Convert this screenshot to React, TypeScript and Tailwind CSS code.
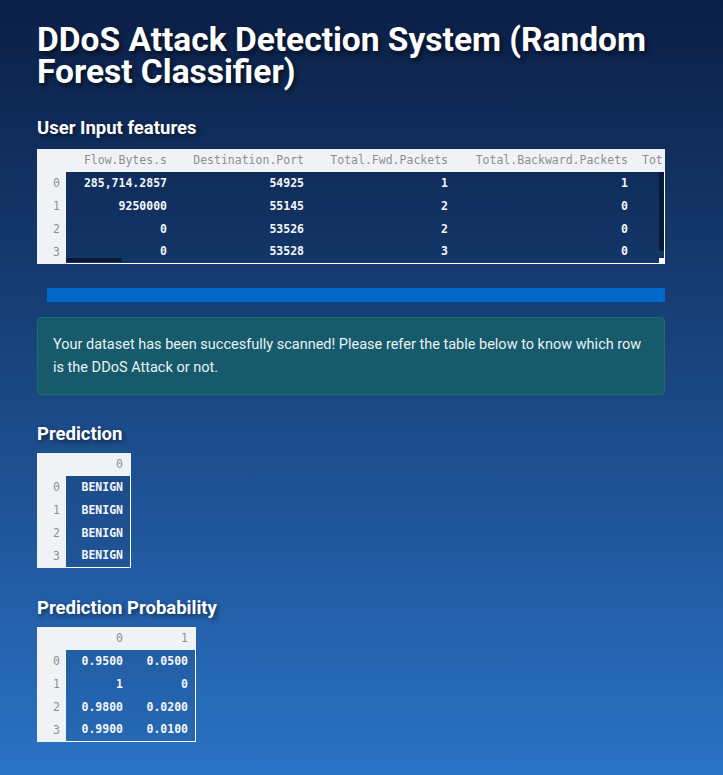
import React from "react";

const sans = { fontFamily: "Roboto, 'Noto Sans', sans-serif" };
const mono = { fontFamily: "'DejaVu Sans Mono', 'Liberation Mono', monospace" };

type Col = { name: string; w: number; align?: "left" | "right" };

function DataTable({
    cols,
    rows,
    width,
    scroll,
}: {
    cols: Col[];
    rows: string[][];
    width: number;
    scroll?: boolean;
}) {
    return (
        <div className="relative overflow-hidden text-[11.5px]" style={{ ...mono, width }}>
            <div className="flex h-[23px] items-center bg-[#f0f2f6] text-[#8d8f98]">
                <div className="w-[29px] shrink-0" />
                {cols.map((c, i) => (
                    <div
                        key={i}
                        className={`shrink-0 overflow-hidden whitespace-nowrap ${c.align === "left" ? "pl-[6px] text-left" : "pr-[8px] text-right"}`}
                        style={{ width: c.w }}
                    >
                        {c.name}
                    </div>
                ))}
            </div>
            <div className="flex">
                <div className="flex w-[29px] shrink-0 flex-col bg-[#f0f2f6] text-[#8d8f98]">
                    {rows.map((_, ri) => (
                        <div key={ri} className="flex h-[23px] items-center justify-end pr-[6px]">
                            {ri}
                        </div>
                    ))}
                </div>
                <div className="flex min-w-0 flex-1 flex-col overflow-hidden border-b border-r border-white bg-black/[0.06]">
                    {rows.map((r, ri) => (
                        <div key={ri} className={`flex items-center ${ri === rows.length - 1 ? "h-[22px]" : "h-[23px]"}`}>
                            {cols.map((c, i) => (
                                <div
                                    key={i}
                                    className="shrink-0 overflow-hidden whitespace-nowrap pr-[8px] text-right font-semibold text-[#f4f6fa]"
                                    style={{ width: c.w }}
                                >
                                    {r[i] ?? ""}
                                </div>
                            ))}
                        </div>
                    ))}
                </div>
            </div>
            {scroll && (
                <>
                    <div className="absolute bottom-[2px] left-[29px] h-[4px] w-[56px] rounded-full bg-[#0a1a36]" />
                    <div className="absolute right-[1px] top-[23px] h-[79px] w-[5px] rounded-b bg-[#0a1a36]" />
                    <div className="absolute bottom-0 right-0 h-[6px] w-[6px] bg-white" />
                </>
            )}
        </div>
    );
}

function Heading({ children }: { children: React.ReactNode }) {
    return (
        <h3 className="text-[18.5px] font-bold leading-[24px] text-white [text-shadow:2px_2px_5px_rgba(0,0,0,0.55)]" style={sans}>
            {children}
        </h3>
    );
}

export default function App() {
    const featureCols: Col[] = [
        { name: "Flow.Bytes.s", w: 109 },
        { name: "Destination.Port", w: 137 },
        { name: "Total.Fwd.Packets", w: 144 },
        { name: "Total.Backward.Packets", w: 180 },
        { name: "Tot", w: 29, align: "left" },
    ];
    const featureRows = [
        ["285,714.2857", "54925", "1", "1"],
        ["9250000", "55145", "2", "0"],
        ["0", "53526", "2", "0"],
        ["0", "53528", "3", "0"],
    ];

    return (
        <div className="min-h-screen w-full bg-gradient-to-b from-[#0b1f46] to-[#2a73c6] pb-8" style={sans}>
            <div className="flex flex-col pl-[37px] pr-[58px] pt-[24px]">
                <h1 className="text-[33.5px] font-bold leading-[32px] text-white [text-shadow:2px_3px_5px_rgba(0,0,0,0.6)]">
                    DDoS Attack Detection System (Random Forest Classifier)
                </h1>

                <div className="mt-[28px]">
                    <Heading>User Input features</Heading>
                </div>
                <div className="mt-[9px]">
                    <DataTable cols={featureCols} rows={featureRows} width={628} scroll />
                </div>

                <div className="mt-[24px] pl-[10px]">
                    <div className="h-[14px] w-full bg-[#0068c9]" />
                </div>

                <div className="mt-[15px] rounded-[4px] border border-[#1c6f63] bg-[#165a6c] px-[15px] py-[15px] text-[14.5px] leading-[23px] text-[#e8f2f2]">
                    Your dataset has been succesfully scanned! Please refer the table below to know which row is the DDoS Attack or not.
                </div>

                <div className="mt-[27px]">
                    <Heading>Prediction</Heading>
                </div>
                <div className="mt-[7px]">
                    <DataTable
                        cols={[{ name: "0", w: 65 }]}
                        rows={[["BENIGN"], ["BENIGN"], ["BENIGN"], ["BENIGN"]]}
                        width={94}
                    />
                </div>

                <div className="mt-[28px]">
                    <Heading>Prediction Probability</Heading>
                </div>
                <div className="mt-[7px]">
                    <DataTable
                        cols={[
                            { name: "0", w: 65 },
                            { name: "1", w: 65 },
                        ]}
                        rows={[
                            ["0.9500", "0.0500"],
                            ["1", "0"],
                            ["0.9800", "0.0200"],
                            ["0.9900", "0.0100"],
                        ]}
                        width={159}
                    />
                </div>
            </div>
        </div>
    );
}
